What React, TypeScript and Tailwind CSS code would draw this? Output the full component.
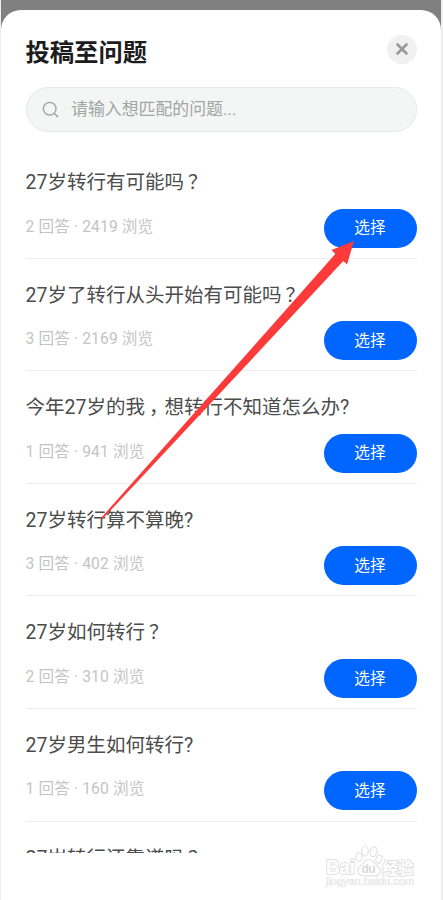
import { Search, X } from "lucide-react";

type Question = {
  title: string;
  answers: number;
  views: number;
};

const questions: Question[] = [
  { title: "27岁转行有可能吗？", answers: 2, views: 2419 },
  { title: "27岁了转行从头开始有可能吗？", answers: 3, views: 2169 },
  { title: "今年27岁的我，想转行不知道怎么办?", answers: 1, views: 941 },
  { title: "27岁转行算不算晚?", answers: 3, views: 402 },
  { title: "27岁如何转行？", answers: 2, views: 310 },
  { title: "27岁男生如何转行?", answers: 1, views: 160 },
];

// Full-width punctuation sits in the middle of its cell.
function Title({ text }: { text: string }) {
  return (
    <h2 className="whitespace-nowrap text-[19.5px] leading-7 text-[#4c4c4c]">
      {text.split(/([？，])/).map((part, i) =>
        part === "？" || part === "，" ? (
          <span key={i} className="inline-block translate-x-[4px]">
            {part}
          </span>
        ) : (
          part
        )
      )}
    </h2>
  );
}

function QuestionRow({ title, answers, views }: Question) {
  return (
    <li className="flex h-[112.6px] shrink-0 flex-col border-b-[1.5px] border-[#ececec] pt-[23px]">
      <Title text={title} />
      <div className="mt-[11.5px] flex items-start justify-between">
        <p className="pt-[6px] text-[15.6px] leading-6 tracking-[0.15px] text-[#c4c4c4]">
          {answers} 回答 · {views} 浏览
        </p>
        <button className="h-[39px] w-[93px] rounded-full bg-[#0066ff] text-[15.7px] leading-none text-white">
          选择
        </button>
      </div>
    </li>
  );
}

function Arrow() {
  return (
    <svg
      className="pointer-events-none absolute -left-px top-0"
      width="443"
      height="900"
      viewBox="0 0 443 900"
    >
      <path
        d="M354 241 L331.5 250 L335.3 254 L295 299.5 L101 518 L102.3 519.3 L307 300 L343.3 261 L347 264.5 Z"
        fill="#fd3a3a"
      />
    </svg>
  );
}

function Watermark() {
  return (
    <svg
      className="pointer-events-none absolute bottom-0 right-[23px]"
      width="98"
      height="58"
      viewBox="0 0 98 58"
      fill="#fff"
      stroke="#e2e2e2"
      strokeWidth="1.2"
      strokeLinejoin="round"
      fontFamily="'Liberation Sans', 'Noto Sans CJK SC', sans-serif"
    >
      <text x="6" y="32" fontSize="20" fontWeight="700" textLength="29" lengthAdjust="spacingAndGlyphs" paintOrder="stroke" strokeWidth="2">
        Bai
      </text>
      <ellipse cx="39" cy="15" rx="3" ry="4.3" transform="rotate(-10 39 15)" />
      <ellipse cx="45" cy="9" rx="3.3" ry="5" />
      <ellipse cx="53.5" cy="9.8" rx="3.3" ry="5" transform="rotate(12 53.5 9.8)" />
      <ellipse cx="59" cy="17" rx="2.9" ry="4.3" transform="rotate(20 59 17)" />
      <path d="M49 17.5c-4 0-5 3-7.5 5.5-3 2.5-4.5 4-3.5 7.5 1 3.300 4 3.500 11 3.200 7 .3 10 .1 11-3.200 1-3.500-.5-5-3.500-7.500-2.500-2.500-3.500-5.500-7.500-5.500z" />
      <text x="41.5" y="31" fontSize="12" fontWeight="700" textLength="14" stroke="none" fill="#dadada">
        du
      </text>
      <text x="62.5" y="32" fontSize="15.5" fontWeight="700" paintOrder="stroke" strokeWidth="2">
        经验
      </text>
      <text x="6" y="43" fontSize="10" fontWeight="400" textLength="88" lengthAdjust="spacingAndGlyphs" stroke="#ececec" fill="#e9e9e9" strokeWidth="0.7">
        jingyan.baidu.com
      </text>
    </svg>
  );
}

export default function App() {
  return (
    <div className="relative h-[900px] w-[443px] overflow-hidden border-l border-r-2 border-[#eeeeee] bg-white font-['Roboto','Noto_Sans_CJK_SC',sans-serif]">
      <div className="bg-[#808080] pt-[10px]">
        <div className="flex h-[890px] flex-col rounded-t-[20px] bg-white px-[24.5px]">
          <header className="flex h-[77px] items-start justify-between">
            <h1 className="pt-[25px] text-[24.3px] font-bold leading-9 text-[#1c1c1c]">
              投稿至问题
            </h1>
            <button className="mt-[24.5px] flex size-[29.5px] items-center justify-center rounded-full bg-[#f1f1f1] text-[#999999]">
              <X size={18} strokeWidth={3.5} />
            </button>
          </header>

          <label className="flex h-[45px] shrink-0 items-center rounded-full border border-[#e6e9e8] bg-[#f4f6f5] pl-[14px]">
            <Search size={19} strokeWidth={1.8} className="text-[#a2a5a4]" />
            <span className="ml-[11.5px] pb-[2px] text-[16.9px] leading-6 text-[#a2a5a4]">
              请输入想匹配的问题...
            </span>
          </label>

          <ul className="mt-[14px] flex flex-col">
            {questions.map((q) => (
              <QuestionRow key={q.title} {...q} />
            ))}
          </ul>
          <div className="h-[31.5px] shrink-0 overflow-hidden pt-[23px]">
            <Title text="27岁转行还靠谱吗？" />
          </div>
        </div>
      </div>

      <Arrow />
      <Watermark />
    </div>
  );
}
